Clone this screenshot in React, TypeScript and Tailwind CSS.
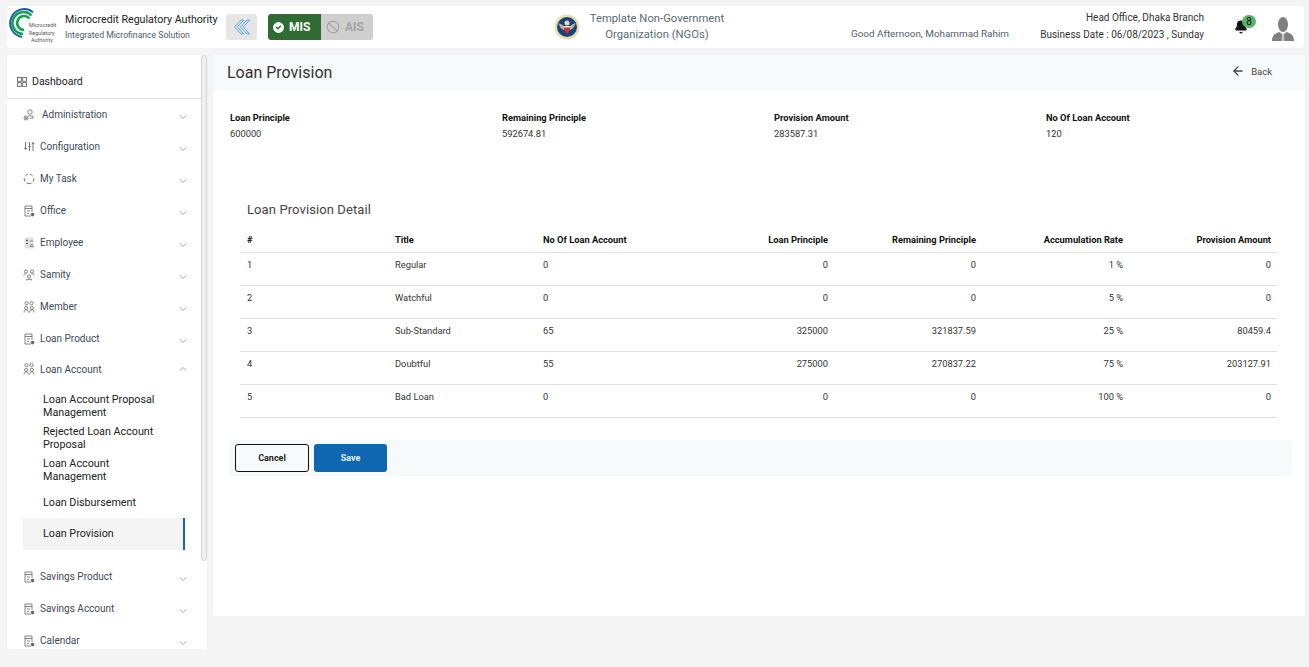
import React from 'react';
import { ChevronDown, ChevronUp, ArrowLeft, Bell, CircleCheck, Ban } from 'lucide-react';

const font = "font-['Roboto','Liberation_Sans',sans-serif]";

const DocIcon = () => (
  <svg width="11" height="12" viewBox="0 0 11 12" fill="none" stroke="#666" strokeWidth="0.8">
    <path d="M7 11H1V1h7v6" />
    <path d="M1 3.5h7M3 6h3M3 8.5h2" />
    <circle cx="8.6" cy="9.6" r="1.8" fill="#666" stroke="none" />
  </svg>
);

const AdminIcon = () => (
  <svg width="12" height="12" viewBox="0 0 12 12" fill="none" stroke="#666" strokeWidth="0.8">
    <circle cx="7" cy="3" r="2.2" />
    <path d="M5 7.2c1.5-.8 3.500-.6 5 .6v1.400H6.500" />
    <circle cx="3" cy="9" r="2" />
    <circle cx="3" cy="9" r="0.6" fill="#666" />
  </svg>
);

const ConfigIcon = () => (
  <svg width="11" height="11" viewBox="0 0 11 11" fill="none" stroke="#666" strokeWidth="0.9">
    <path d="M1.500 1v7M.3 6.800l1.200 1.800 1.200-1.800M5.500 1v9M4.300 5.500h2.400M9 2v8M7.800 3.200 9 1.400l1.200 1.800" />
  </svg>
);

const TaskIcon = () => (
  <svg width="12" height="12" viewBox="0 0 12 12" fill="none" stroke="#666" strokeWidth="0.9">
    <path d="M2.200 3.200A4.800 4.800 0 0 1 5 1.300M7 1.300a4.800 4.800 0 0 1 2.800 1.900M10.700 5.200a4.800 4.800 0 0 1-.6 3.300M8.500 10a4.800 4.800 0 0 1-5 0M1.900 8.500a4.800 4.800 0 0 1-.6-3.300" />
  </svg>
);

const EmployeeIcon = () => (
  <svg width="11" height="12" viewBox="0 0 11 12">
    <rect x="0.500" y="0.500" width="9" height="11" rx="1" fill="#e2e2e2" />
    <circle cx="3" cy="3.500" r="1.100" fill="#666" />
    <path d="M1.500 7c0-1.500 3-1.500 3 0z" fill="#666" />
    <path d="M6 4h3M6 9.500l1.800-2.500 1.800 2.500z" stroke="#666" strokeWidth="0.7" fill="none" />
  </svg>
);

const SamityIcon = () => (
  <svg width="12" height="12" viewBox="0 0 12 12" fill="none" stroke="#666" strokeWidth="0.8">
    <circle cx="3" cy="2.500" r="1.600" />
    <circle cx="9" cy="2.500" r="1.600" />
    <circle cx="6" cy="7.500" r="1.600" />
    <path d="M.7 6.500c.3-1.500 1.500-2 2.800-1.700M11.300 6.500c-.3-1.500-1.500-2-2.800-1.700M3.500 11.500v-1.200h5v1.200" />
  </svg>
);

const MemberIcon = () => (
  <svg width="12" height="12" viewBox="0 0 12 12" fill="none" stroke="#666" strokeWidth="0.8">
    <circle cx="3.500" cy="2.200" r="1.600" />
    <circle cx="8.500" cy="2.200" r="1.600" />
    <circle cx="3.200" cy="7" r="1.600" />
    <circle cx="8.800" cy="7" r="1.600" />
    <path d="M1 11.500c.2-2 1-2.600 2.200-2.600s2 .6 2.200 2.600M6.600 11.500c.2-2 1-2.600 2.200-2.600s2 .6 2.200 2.600" />
  </svg>
);

const menuTop = [
  { label: 'Administration', icon: <AdminIcon />, gap: 'gap-[7px]' },
  { label: 'Configuration', icon: <ConfigIcon />, gap: 'gap-[5px]' },
  { label: 'My Task', icon: <TaskIcon />, gap: 'gap-[5px]' },
  { label: 'Office', icon: <DocIcon />, gap: 'gap-[5px]' },
  { label: 'Employee', icon: <EmployeeIcon />, gap: 'gap-[5px]' },
  { label: 'Samity', icon: <SamityIcon />, gap: 'gap-[5px]' },
  { label: 'Member', icon: <MemberIcon />, gap: 'gap-[5px]' },
  { label: 'Loan Product', icon: <DocIcon />, gap: 'gap-[5px]' },
];

const subMenu = [
  'Loan Account Proposal Management',
  'Rejected Loan Account Proposal',
  'Loan Account Management',
  'Loan Disbursement',
];

const rows = [
  ['1', 'Regular', '0', '0', '0', '1 %', '0'],
  ['2', 'Watchful', '0', '0', '0', '5 %', '0'],
  ['3', 'Sub-Standard', '65', '325000', '321837.59', '25 %', '80459.4'],
  ['4', 'Doubtful', '55', '275000', '270837.22', '75 %', '203127.91'],
  ['5', 'Bad Loan', '0', '0', '0', '100 %', '0'],
];

const summary = [
  ['Loan Principle', '600000'],
  ['Remaining Principle', '592674.81'],
  ['Provision Amount', '283587.31'],
  ['No Of Loan Account', '120'],
];

const MenuRow = ({ label, icon, gap }: { label: string; icon: React.ReactNode; gap: string }) => (
  <div className="h-[32px] flex items-center justify-between pl-[16px] pr-[18px]">
    <div className={`flex items-center ${gap} -mt-[3px]`}>
      <span className="w-[12px] flex justify-center">{icon}</span>
      <span className="text-[10px] text-[#3f4a55]">{label}</span>
    </div>
    <ChevronDown size={12} strokeWidth={1.2} color="#666" className="mt-[1px]" />
  </div>
);

const Header = () => (
  <header className="h-[42px] ml-[7px] mr-[5px] mt-[6px] bg-white rounded-[3px] flex items-center relative">
    <svg width="53" height="38" viewBox="0 0 53 38" className="shrink-0">
      <path d="M26 4.300A14 14 0 1 0 15 29" fill="none" stroke="#1c5fa8" strokeWidth="2" />
      <path d="M24.500 7.500A11 11 0 1 0 16 26" fill="none" stroke="#12a150" strokeWidth="2.500" />
      <path d="M22.500 10.500A7 7 0 1 0 17 22" fill="none" stroke="#12a150" strokeWidth="2.500" />
      <text x="22" y="19" fontSize="5.400" fill="#555" fontFamily="Roboto">Microcredit</text>
      <text x="22" y="26.500" fontSize="5.400" fill="#555" fontFamily="Roboto">Regulatory</text>
      <text x="24" y="34" fontSize="5.400" fill="#555" fontFamily="Roboto">Authority</text>
    </svg>
    <div className="ml-[5px] w-[161px]">
      <div className="text-[10.65px] leading-[14px] text-[#222]">Microcredit Regulatory Authority</div>
      <div className="text-[8.65px] leading-[14px] text-[#4a5a6a] mt-[1px]">Integrated Microfinance Solution</div>
    </div>
    <button className="w-[31px] h-[26px] bg-[#e6e6e6] rounded-[3px] flex items-center justify-center">
      <svg width="18" height="16" viewBox="0 0 18 16" fill="none" stroke="#4d9cf0" strokeWidth="0.9" strokeLinejoin="round">
        <path d="M8 1 1.500 8 8 15h2.500L4.500 8l6-7z" />
        <path d="M14 1 7.500 8l6.500 7h2.500L10.500 8l6-7z" />
      </svg>
    </button>
    <div className="ml-[11px] flex h-[26px] w-[105px] rounded-[3px] overflow-hidden">
      <div className="w-[53px] bg-[#2f6b33] flex items-center pl-[3px] gap-[3px] text-white text-[12px] font-bold">
        <CircleCheck size={15} color="#2f6b33" fill="white" strokeWidth={2.5} />
        MIS
      </div>
      <div className="flex-1 bg-[#cfcfcf] flex items-center pl-[5px] gap-[5px] text-[#a3a3a3] text-[12px] font-bold">
        <Ban size={14} strokeWidth={2} />
        AIS
      </div>
    </div>
    <svg width="26" height="26" viewBox="0 0 26 26" className="ml-[181px] shrink-0">
      <circle cx="13" cy="13" r="12.500" fill="#e8e0b0" />
      <circle cx="13" cy="13" r="10" fill="#1f3f7a" />
      <path d="M4.500 9c2 1 4 1.500 5 3h7c1-1.500 3-2 5-3-1 4-3 6-5 7H9.500c-2-1-4-3-5-7z" fill="#b9b39a" />
      <circle cx="13" cy="9" r="2.500" fill="#e2d9b0" />
      <path d="M10 12h6v4l-3 4-3-4z" fill="#b83a3a" />
      <path d="M10 12h6v1.500h-6z" fill="#e8e8f0" />
    </svg>
    <div className="w-[150px] ml-[2px] text-center text-[11.25px] leading-[16px] text-[#5a6b72]">
      Template Non-Government
      <br />
      Organization (NGOs)
    </div>
    <div className="absolute left-[844px] top-[21px] text-[9.9px] leading-[14px] text-[#55606a]">Good Afternoon, Mohammad Rahim</div>
    <div className="absolute right-[100px] top-[3px] text-right text-[10px] leading-[17px] text-[#333]">
      <div>Head Office, Dhaka Branch</div>
      <div>Business Date : 06/08/2023 , Sunday</div>
    </div>
    <div className="absolute left-[1227px] top-[14px]">
      <Bell size={14} fill="#111" color="#111" />
      <span className="absolute -top-[5px] left-[8px] w-[14px] h-[13px] rounded-full bg-[#58b368] text-[10px] leading-[13px] text-center text-[#111]">8</span>
    </div>
    <svg width="22" height="24" viewBox="0 0 22 24" className="absolute left-[1265px] top-[11px]">
      <ellipse cx="11" cy="7.500" rx="5" ry="7.500" fill="#808080" />
      <path d="M0 24c0-6 3-7.500 7.500-9l3.500 3 3.500-3c4.500 1.500 7.500 3 7.500 9z" fill="#808080" />
      <path d="M10 18h2l.5 6h-3z" fill="#c8c8c8" />
    </svg>
  </header>
);

const Sidebar = () => (
  <aside className="w-[200px] h-[594px] ml-[7px] bg-white rounded-[3px] overflow-hidden shrink-0">
    <div className="h-[44px] border-b border-[#e2e2e2] flex items-center pl-[10px] gap-[5px] pt-[10px] mr-[6px]">
      <svg width="10" height="10" viewBox="0 0 10 10" fill="none" stroke="#555" strokeWidth="0.8">
        <rect x="0.500" y="0.500" width="3.800" height="3.800" />
        <rect x="5.700" y="0.500" width="3.800" height="3.800" />
        <rect x="0.500" y="5.700" width="3.800" height="3.800" />
        <rect x="5.700" y="5.700" width="3.800" height="3.800" />
      </svg>
      <span className="text-[10.5px] text-[#222]">Dashboard</span>
    </div>
    <div className="pt-[1px]">
      {menuTop.map((m) => (
        <MenuRow key={m.label} {...m} />
      ))}
      <div className="h-[31px] flex items-center justify-between pl-[16px] pr-[18px]">
        <div className="flex items-center gap-[5px] -mt-[5px]">
          <span className="w-[12px] flex justify-center">
            <MemberIcon />
          </span>
          <span className="text-[10px] text-[#3f4a55]">Loan Account</span>
        </div>
        <ChevronUp size={12} strokeWidth={1.2} color="#666" className="-mt-[5px]" />
      </div>
      <div className="pl-[16px] pt-[3px]">
        {subMenu.map((s) => (
          <div key={s} className="h-[32px] w-[162px] pl-[20px] pr-[22px] flex items-center text-[10.75px] leading-[13px] text-[#222]">
            {s}
          </div>
        ))}
        <div className="h-[32px] w-[162px] pl-[20px] flex items-center text-[10.75px] text-[#222] bg-[#f4f4f4] border-r-2 border-[#0f67b1]">
          Loan Provision
        </div>
      </div>
      <div className="pt-[12px]">
        {['Savings Product', 'Savings Account', 'Calendar'].map((l) => (
          <MenuRow key={l} label={l} icon={<DocIcon />} gap="gap-[5px]" />
        ))}
      </div>
    </div>
  </aside>
);

const Main = () => (
  <main className="w-[1092px] h-[561px] ml-[6px] bg-white rounded-[3px] overflow-hidden shrink-0">
    <div className="h-[35px] bg-[#f7fafb] flex items-center justify-between pl-[14px] pr-[33px]">
      <h1 className="text-[16px] text-[#333]">Loan Provision</h1>
      <div className="flex items-center gap-[6px] text-[#444]">
        <ArrowLeft size={14} strokeWidth={2.200} className="-mt-[3px]" />
        <span className="text-[9.5px]">Back</span>
      </div>
    </div>
    <div className="grid grid-cols-4 pl-[17px] pt-[20px] w-[1105px]">
      {summary.map(([k, v]) => (
        <div key={k} className="text-[9.3px] leading-[16px]">
          <div className="font-bold text-[#111]">{k}</div>
          <div className="text-[#333]">{v}</div>
        </div>
      ))}
    </div>
    <h2 className="ml-[34px] mt-[59px] text-[13px] leading-[18px] text-[#444] tracking-[0.1px]">Loan Provision Detail</h2>
    <table className="ml-[27px] mt-[7px] w-[1037px] table-fixed text-[9.3px]">
      <colgroup>
        <col className="w-[148px]" />
        <col className="w-[148px]" />
        <col className="w-[148px]" />
        <col className="w-[148px]" />
        <col className="w-[148px]" />
        <col className="w-[148px]" />
        <col className="w-[149px]" />
      </colgroup>
      <thead>
        <tr className="h-[26px] border-b border-[#dee2e6] font-bold text-[#111]">
          <th className="pl-[7px] pt-[2px] text-left">#</th>
          <th className="pl-[7px] pt-[2px] text-left">Title</th>
          <th className="pl-[7px] pt-[2px] text-left">No Of Loan Account</th>
          <th className="pr-[4px] pt-[2px] text-right">Loan Principle</th>
          <th className="pr-[4px] pt-[2px] text-right">Remaining Principle</th>
          <th className="pr-[5px] pt-[2px] text-right">Accumulation Rate</th>
          <th className="pr-[6px] pt-[2px] text-right">Provision Amount</th>
        </tr>
      </thead>
      <tbody className="text-[#333]">
        {rows.map((r) => (
          <tr key={r[0]} className="h-[33px] border-b border-[#dee2e6] align-top">
            <td className="pl-[7px] pt-[5px]">{r[0]}</td>
            <td className="pl-[7px] pt-[5px]">{r[1]}</td>
            <td className="pl-[7px] pt-[5px]">{r[2]}</td>
            <td className="pr-[4px] pt-[5px] text-right">{r[3]}</td>
            <td className="pr-[4px] pt-[5px] text-right">{r[4]}</td>
            <td className="pr-[5px] pt-[5px] text-right">{r[5]}</td>
            <td className="pr-[6px] pt-[5px] text-right">{r[6]}</td>
          </tr>
        ))}
      </tbody>
    </table>
    <div className="ml-[16px] mr-[13px] mt-[22px] h-[36px] bg-[#f7fafb] rounded-[3px] flex items-center pl-[6px] gap-[5px] text-[9px] font-bold">
      <button className="w-[74px] h-[28px] pt-[2px] border border-[#111] rounded-[3px] text-[#222] font-bold">Cancel</button>
      <button className="w-[73px] h-[28px] pt-[2px] bg-[#0f67b1] rounded-[3px] text-[#e8f0f8] font-bold">Save</button>
    </div>
  </main>
);

export default function App() {
  return (
    <div className={`${font} w-[1309px] h-[667px] bg-[#f4f4f4] overflow-hidden relative`}>
      <Header />
      <div className="flex mt-[7px]">
        <Sidebar />
        <Main />
      </div>
      <div className="absolute left-[201px] top-[55px] w-[6px] h-[506px] bg-[#f0f0f0] border border-[#d6d6d6] rounded-[3px]" />
    </div>
  );
}
